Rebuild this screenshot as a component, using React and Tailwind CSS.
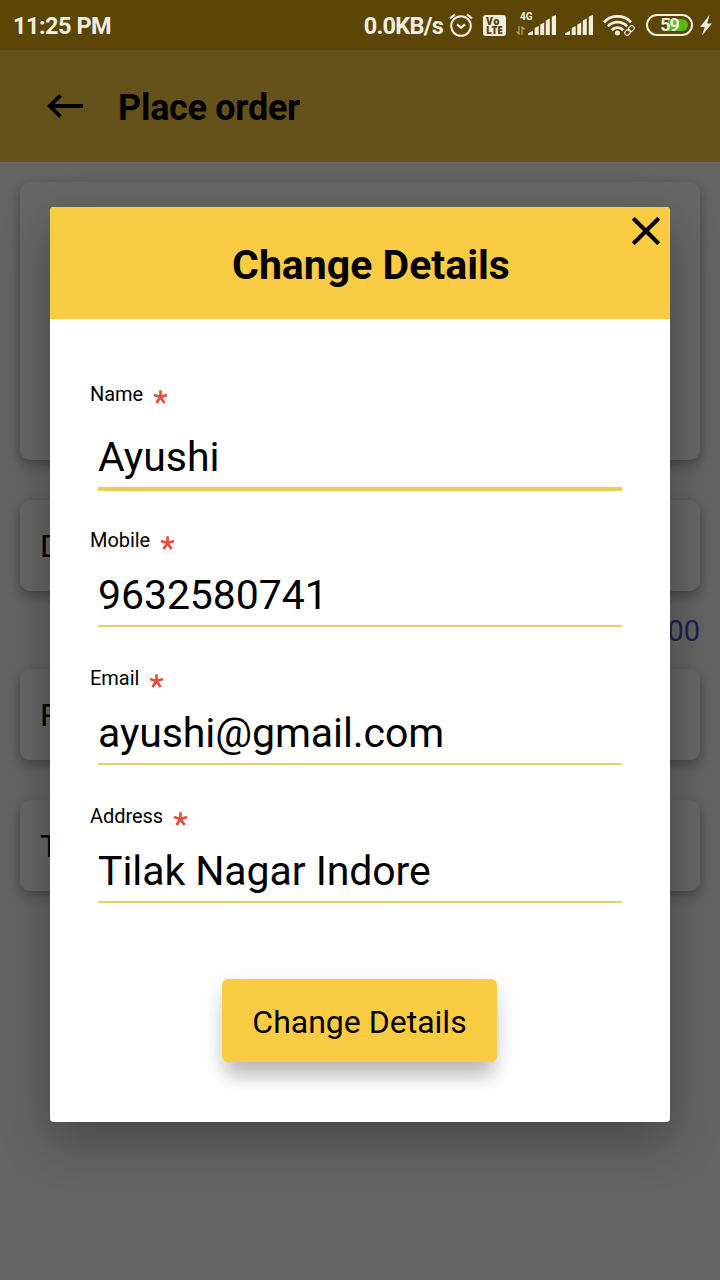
const fields = [
  { label: 'Name', value: 'Ayushi', focused: true },
  { label: 'Mobile', value: '9632580741' },
  { label: 'Email', value: 'ayushi@gmail.com' },
  { label: 'Address', value: 'Tilak Nagar Indore' },
];

function SignalBars() {
  return (
    <svg width="28" height="20" viewBox="0 0 28 20" fill="#f3eee0">
      <path d="M0 20v-1.5l5-3V20z" />
      <path d="M6.7 20v-7l4-2v9zM12.2 20V9.5l4-2V20zM17.8 20V5.5l4-2V20zM23.8 20V1.5L28 0v20z" />
    </svg>
  );
}

function AlarmIcon() {
  return (
    <svg width="24" height="24" viewBox="0 0 24 24" fill="none" stroke="#f3eee0" strokeWidth="2">
      <circle cx="12" cy="13" r="9.8" />
      <path d="M1 5.5 6 1.3M23 5.5l-5-4.2" strokeWidth="2.2" />
      <path d="m8 11.3 4 3.4 4-3.4" strokeWidth="2.2" />
    </svg>
  );
}

function WifiIcon() {
  return (
    <svg width="32" height="21" viewBox="0 0 32 21" fill="none" stroke="#f3eee0" strokeWidth="2.8">
      <path d="M1 7.2a18.5 18.5 0 0 1 27 0" />
      <path d="M4.8 11.4a13.3 13.3 0 0 1 19.4 0" />
      <path d="M8.6 15.3a8 8 0 0 1 11.8 0" />
      <circle cx="14.4" cy="18" r="2.5" fill="#f3eee0" stroke="none" />
      <g transform="rotate(-45 26.5 15.5)">
        <rect x="20" y="12.4" width="13" height="6.2" rx="3" fill="#5b4507" stroke="none" />
        <rect x="20.8" y="13.2" width="6.2" height="4.6" rx="2.3" strokeWidth="1.2" />
        <rect x="26" y="13.2" width="6.2" height="4.6" rx="2.3" strokeWidth="1.2" />
      </g>
    </svg>
  );
}

function StatusBar() {
  return (
    <div className="flex h-[50px] items-start bg-[#5b4507] text-[#f3eee0]">
      <span className="mt-3 ml-[13px] text-[23.5px] leading-7 font-bold tracking-[-0.5px]">11:25 PM</span>
      <span className="mt-3 mr-[6px] ml-auto text-[23.5px] leading-7 font-bold tracking-[-0.75px]">0.0KB/s</span>
      <div className="mt-[13px] mr-[10px]"><AlarmIcon /></div>
      <div className="mt-[15px] mr-[10px] flex h-[21px] w-[23px] flex-col rounded-[3px] bg-[#f3eee0] pl-[3px] font-['Open_Sans',sans-serif] text-[10px] leading-[9px] font-extrabold text-[#5b4507]">
        <span className="mt-[2px] h-[9px] tracking-[0.3px]">Vo</span>
        <span className="h-[9px] tracking-[-0.3px]">LTE</span>
      </div>
      <div className="mt-3 mr-[1px] flex w-[11px] flex-col">
        <span className="ml-[4px] h-[14px] text-[10px] leading-[10px] font-bold">4G</span>
        <svg width="9" height="9" viewBox="0 0 9 9" fill="none" stroke="#b3a37c" strokeWidth="1.3">
          <path d="M3 0v8L.5 5.5M6 9V1l2.5 2.5" />
        </svg>
      </div>
      <div className="mt-[15px] mr-[9px]"><SignalBars /></div>
      <div className="mt-[15px] mr-[10px]"><SignalBars /></div>
      <div className="mt-[15px] mr-[11px]"><WifiIcon /></div>
      <div className="mt-[14px] mr-[7px] h-[22px] w-[47px] rounded-full border-2 border-[#f3eee0] bg-[linear-gradient(90deg,transparent_46%,#54b91b_46%)] bg-clip-content p-[3px]">
        <div className="-mt-[3px] flex h-[18px] items-center justify-center text-[18px] leading-[18px] font-bold tracking-[-1px]">59</div>
      </div>
      <svg className="mt-[15px] mr-2" width="12" height="21" viewBox="0 0 12 21" fill="#f3eee0">
        <path d="M9.5 0 0 12h4.7L2 20.5 12 8.5H7.2z" />
      </svg>
    </div>
  );
}

function Card({ className, children }) {
  return (
    <div className={`mx-5 flex items-center rounded-[10px] bg-[#666] pl-5 text-[32px] shadow-[0_5px_12px_rgba(0,0,0,0.3)] ${className}`}>
      {children}
    </div>
  );
}

function Field({ label, value, focused }) {
  return (
    <div className={focused ? 'h-[146px]' : 'h-[138px]'}>
      <div className="flex h-6 items-center text-xl leading-6">
        <span className="tracking-[-0.05px]">{label}</span>
        <svg className="mt-[5px] ml-[10px]" width="15" height="14" viewBox="0 0 15 14" fill="none" stroke="#eb4b3f" strokeWidth="2.7">
          <path d="M7.5 7V.3M7.5 7 1 5M7.5 7 14 5M7.5 7l-4 6M7.5 7l4 6" />
        </svg>
      </div>
      <div
        className={
          focused
            ? 'mx-2 mt-[13px] h-[72px] border-b-4 border-[#f2ca57] pt-[14px] text-[41px] leading-[48px]'
            : 'mx-2 mt-[7px] h-[68px] border-b-2 border-[#e7cf6b] pt-3 text-[41px] leading-[48px] tracking-[-0.08px]'
        }
      >
        {value}
      </div>
    </div>
  );
}

export default function App() {
  return (
    <div className="relative h-[1280px] w-[720px] overflow-hidden bg-[#646464] font-[Roboto,sans-serif] text-black">
      <StatusBar />
      <header className="flex h-28 items-center bg-[#65511a] pl-[47px]">
        <svg width="36" height="24" viewBox="0 0 36 24" fill="none" stroke="#000" strokeWidth="3.8">
          <path d="M36 12H3M13.5 1.3 2.8 12l10.7 10.7" />
        </svg>
        <h1 className="mt-[3px] ml-[35px] text-4xl font-bold tracking-[-0.3px]">Place order</h1>
      </header>
      <main className="flex flex-col pt-5">
        <Card className="h-[278px]" />
        <Card className="mt-10 h-[91px]">D</Card>
        <div className="flex h-[78px] items-center justify-end pt-1 pr-5 text-[29px] text-[#1c2250]">00</div>
        <Card className="h-[91px]">P</Card>
        <Card className="mt-10 h-[91px]">T</Card>
      </main>
      <section className="absolute top-[207px] left-[50px] flex h-[915px] w-[620px] flex-col overflow-visible rounded bg-white shadow-[0_18px_50px_rgba(0,0,0,0.3)]">
        <div className="relative flex h-28 items-center justify-center rounded-t bg-[#facc43] pt-1 pl-[22px]">
          <h2 className="text-[41px] leading-[48px] font-bold">Change Details</h2>
          <svg className="absolute top-[10px] right-[10px]" width="28" height="28" viewBox="0 0 28 28" fill="none" stroke="#000" strokeWidth="4.1">
            <path d="m1.3 1.3 25.4 25.4M26.7 1.3 1.3 26.7" />
          </svg>
        </div>
        <div className="flex flex-col px-10 pt-[63px]">
          {fields.map((field) => (
            <Field key={field.label} {...field} />
          ))}
        </div>
        <button className="mt-[37px] ml-[172px] h-[83px] w-[275px] rounded-md bg-[#facc43] pt-[2px] text-[32px] shadow-[0_20px_18px_-5px_rgba(0,0,0,0.18),0_8px_22px_rgba(0,0,0,0.14)]">
          Change Details
        </button>
      </section>
    </div>
  );
}
